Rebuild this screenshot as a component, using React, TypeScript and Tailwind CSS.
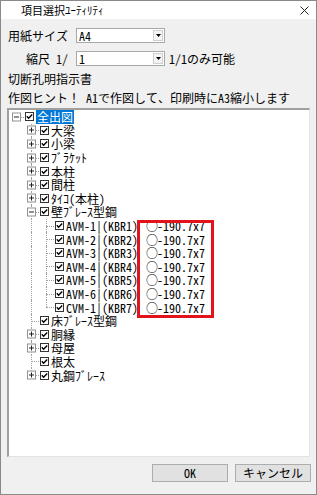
import React from 'react';

type Row = {
  label: string;
  extra?: string;
  guides: boolean[];
  exp?: 'plus' | 'minus';
  last?: boolean;
  root?: boolean;
  selected?: boolean;
};

const L1 = [false];
const L2 = [false, true];

const rows: Row[] = [
  { label: '全出図', guides: [], exp: 'minus', root: true, selected: true },
  { label: '大梁', guides: L1, exp: 'plus' },
  { label: '小梁', guides: L1, exp: 'plus' },
  { label: 'ﾌﾞﾗｹｯﾄ', guides: L1, exp: 'plus' },
  { label: '本柱', guides: L1, exp: 'plus' },
  { label: '間柱', guides: L1, exp: 'plus' },
  { label: 'ﾀｲｺ(本柱)', guides: L1, exp: 'plus' },
  { label: '壁ﾌﾞﾚｰｽ型鋼', guides: L1, exp: 'minus' },
  { label: 'AVM-1|(KBR1)', extra: '-190.7x7', guides: L2 },
  { label: 'AVM-2|(KBR2)', extra: '-190.7x7', guides: L2 },
  { label: 'AVM-3|(KBR3)', extra: '-190.7x7', guides: L2 },
  { label: 'AVM-4|(KBR4)', extra: '-190.7x7', guides: L2 },
  { label: 'AVM-5|(KBR5)', extra: '-190.7x7', guides: L2 },
  { label: 'AVM-6|(KBR6)', extra: '-190.7x7', guides: L2 },
  { label: 'CVM-1|(KBR7)', extra: '-190.7x7', guides: L2, last: true },
  { label: '床ﾌﾞﾚｰｽ型鋼', guides: L1 },
  { label: '胴縁', guides: L1, exp: 'plus' },
  { label: '母屋', guides: L1, exp: 'plus' },
  { label: '根太', guides: L1 },
  { label: '丸鋼ﾌﾞﾚｰｽ', guides: L1, exp: 'plus', last: true },
];

function Expander({ type }: { type: 'plus' | 'minus' }) {
  return (
    <div className="absolute left-[3px] top-1/2 -translate-y-1/2 w-[9px] h-[9px] border border-[#919191] bg-white flex items-center justify-center">
      <div className="absolute w-[5px] h-px bg-[#222]" />
      {type === 'plus' && <div className="absolute w-px h-[5px] bg-[#222]" />}
    </div>
  );
}

function Check() {
  return (
    <svg width="9" height="9" viewBox="0 0 9 9" className="shrink-0 ml-px">
      <rect x="0.5" y="0.5" width="8" height="8" fill="white" stroke="#333" />
      <path d="M1.8 4.3 L3.6 6.2 L7.2 2.4" stroke="#000" strokeWidth="1.4" fill="none" />
    </svg>
  );
}

function TreeRow({ row }: { row: Row }) {
  return (
    <div className="flex items-center h-[13.6px] relative">
      {row.guides.map((g, i) => (
        <div key={i} className="relative w-[15px] h-full shrink-0">
          {g && <div className="absolute left-[7px] top-0 bottom-0 border-l border-dotted border-[#a0a0a0]" />}
        </div>
      ))}
      <div className="relative w-[15px] h-full shrink-0">
        {!row.root && (
          <div
            className={
              row.last
                ? 'absolute left-[7px] top-0 h-1/2 border-l border-dotted border-[#a0a0a0]'
                : 'absolute left-[7px] top-0 bottom-0 border-l border-dotted border-[#a0a0a0]'
            }
          />
        )}
        <div className="absolute left-[7px] right-0 top-1/2 border-t border-dotted border-[#a0a0a0]" />
        {row.exp && <Expander type={row.exp} />}
      </div>
      <Check />
      {row.selected ? (
        <span className="ml-[2px] px-px bg-[#0078d7] text-white leading-[13.6px] whitespace-pre">{row.label}</span>
      ) : (
        <span className="ml-[2px] leading-[13px] whitespace-pre">{row.label}</span>
      )}
      {row.extra && (
        <span className="ml-[8px] flex items-center leading-[13px] whitespace-pre">
          <span className="inline-block w-[11px] leading-[13px] text-center">○</span>
          {row.extra}
        </span>
      )}
    </div>
  );
}

function Combo({ value }: { value: string }) {
  return (
    <div className="w-[89px] h-[15px] bg-white border border-[#a8a8a8] flex items-center shrink-0">
      <span className="flex-1 pl-[2px] leading-[13px] text-[12px]">{value}</span>
      <div className="w-[10px] h-[11px] mr-px border border-[#cfcfcf] bg-[#f4f4f4] flex items-center justify-center">
        <svg width="5" height="3" viewBox="0 0 5 3">
          <path d="M0 0 H5 L2.5 3 Z" fill="#000" />
        </svg>
      </div>
    </div>
  );
}

export default function App() {
  return (
    <div className="w-[317px] h-[495px] bg-[#f0f0f0] border border-[#8a8a8a] flex flex-col text-[12px] text-black font-['Noto_Sans_Mono_CJK_JP','Noto_Sans_CJK_JP',sans-serif] overflow-hidden">
      <div className="h-[18px] bg-white flex items-center justify-between pl-[20px] pr-[7px] shrink-0">
        <span className="text-[11px] leading-[12px]">項目選択ﾕｰﾃｨﾘﾃｨ</span>
        <svg width="9" height="9" viewBox="0 0 9 9">
          <path d="M0.5 0.5 L8.5 8.5 M8.5 0.5 L0.5 8.5" stroke="#222" strokeWidth="1" />
        </svg>
      </div>
      <div className="flex flex-col pl-[6px] pr-[5px] flex-1">
        <div className="flex items-center mt-[9px] pl-px">
          <span className="w-[68px] leading-[14px]">用紙サイズ</span>
          <Combo value="A4" />
        </div>
        <div className="flex items-center mt-[8px] pl-px">
          <span className="w-[68px] pl-[18px] leading-[14px] whitespace-pre">縮尺 1/</span>
          <Combo value="1" />
          <span className="ml-[4px] leading-[14px]">1/1のみ可能</span>
        </div>
        <div className="mt-[6px] pl-px h-[14px] leading-[14px]">切断孔明指示書</div>
        <div className="mt-[5px] pl-px h-[14px] leading-[14px] whitespace-pre">作図ヒント！ A1で作図して、印刷時にA3縮小します</div>
        <div className="relative mt-[3px] w-[303px] h-[349px] bg-white border-t-2 border-l-2 border-r border-b border-t-[#a0a0a0] border-l-[#a0a0a0] border-r-[#e3e3e3] border-b-[#e3e3e3] overflow-hidden">
          <div className="flex flex-col">
            {rows.map((r, i) => (
              <TreeRow key={i} row={r} />
            ))}
          </div>
          <div className="absolute left-[128px] top-[110px] w-[77px] h-[98px] border-[3px] border-[#e3131b]" />
        </div>
        <div className="flex justify-end gap-[7px] mt-[7px]">
          <button className="w-[76px] h-[18px] bg-[#e1e1e1] border border-[#adadad] leading-[14px] text-[12px]">OK</button>
          <button className="w-[76px] h-[18px] bg-[#e1e1e1] border border-[#adadad] leading-[14px] text-[12px]">キャンセル</button>
        </div>
      </div>
    </div>
  );
}
